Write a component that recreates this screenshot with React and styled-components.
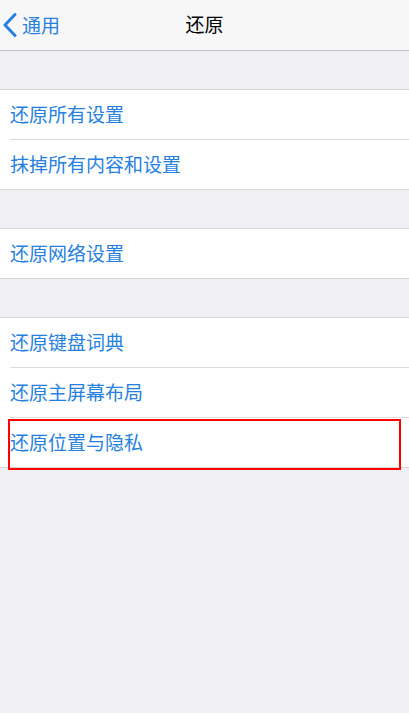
import React from 'react';
import styled, { createGlobalStyle } from 'styled-components';

const GlobalStyle = createGlobalStyle`
  html, body {
    margin: 0;
    padding: 0;
    background: #efeff4;
  }
  body {
    font-family: "Noto Sans CJK SC", "Noto Sans", sans-serif;
    -webkit-font-smoothing: antialiased;
  }
`;

const Page = styled.div`
  width: 409px;
  min-height: 713px;
  background: #efeff4;
`;

const NavBar = styled.div`
  height: 50px;
  background: #f7f7f8;
  border-bottom: 1px solid #c4c4c8;
  display: grid;
  grid-template-columns: 1fr auto 1fr;
  align-items: center;
`;

const Back = styled.div`
  display: flex;
  align-items: center;
  gap: 5px;
  padding-left: 3px;
  padding-bottom: 2px;
  color: #2580e0;
  font-size: 19px;

  svg {
    display: block;
    margin-top: 2px;
  }
`;

const Title = styled.div`
  font-size: 19px;
  color: #000;
  padding-bottom: 3px;
`;

const Group = styled.div`
  margin-top: 38px;
  background: #fff;
  border-top: 1px solid #d6d6da;
  border-bottom: 1px solid #d6d6da;
`;

const Row = styled.div`
  position: relative;
  height: 49px;
  box-sizing: border-box;
  display: flex;
  align-items: center;
  padding: 0 0 3px 10px;
  color: #2580e0;
  font-size: 19px;

  & + & {
    height: 50px;
    border-top: 1px solid #dcdce0;
    margin-left: 10px;
    padding-left: 0;
  }
`;

const Highlight = styled.div`
  position: absolute;
  top: 1px;
  left: -2px;
  right: 8px;
  bottom: -3px;
  border: 2px solid #ff0000;
  pointer-events: none;
`;

const groups = [
  ['还原所有设置', '抹掉所有内容和设置'],
  ['还原网络设置'],
  ['还原键盘词典', '还原主屏幕布局', '还原位置与隐私'],
];

export default function App() {
  return (
    <Page>
      <GlobalStyle />
      <NavBar>
        <Back>
          <svg width="14" height="24" viewBox="0 0 14 24">
            <polyline
              points="12,1.5 2,12 12,22.5"
              fill="none"
              stroke="#2580e0"
              strokeWidth="3"
              strokeLinecap="round"
              strokeLinejoin="round"
            />
          </svg>
          通用
        </Back>
        <Title>还原</Title>
        <div />
      </NavBar>
      {groups.map((items, gi) => (
        <Group key={gi}>
          {items.map((label) => (
            <Row key={label}>
              {label}
              {label === '还原位置与隐私' && <Highlight />}
            </Row>
          ))}
        </Group>
      ))}
    </Page>
  );
}
